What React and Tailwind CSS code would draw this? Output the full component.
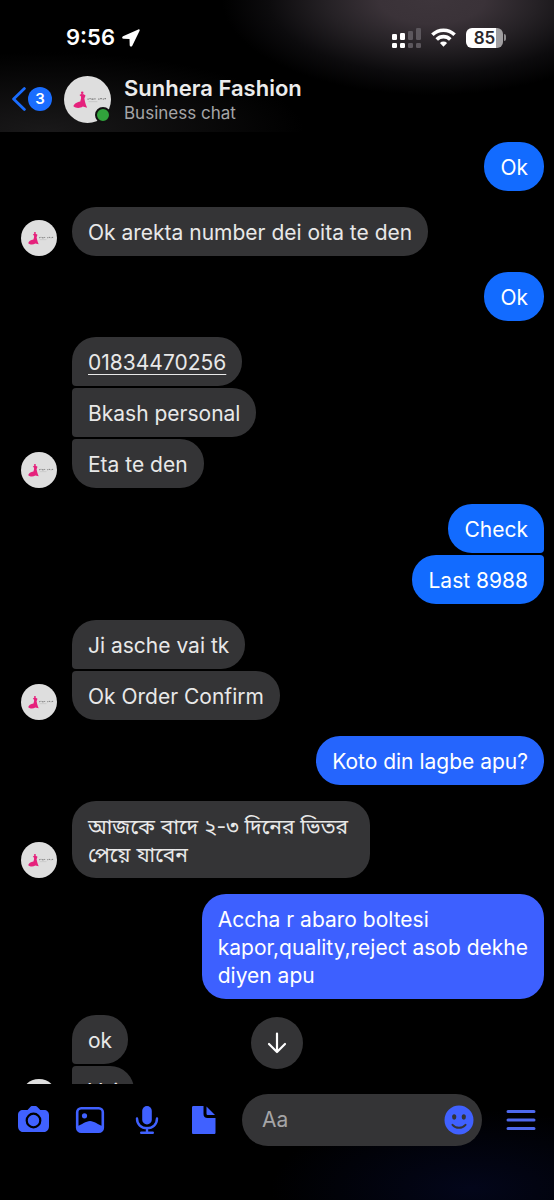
import React, { useState } from 'react';

const groups = [
  { from: 'me', items: [{ text: 'Ok' }] },
  { from: 'them', items: [{ text: 'Ok arekta number dei oita te den' }] },
  { from: 'me', items: [{ text: 'Ok' }] },
  {
    from: 'them',
    items: [{ text: '01834470256', tel: true }, { text: 'Bkash personal' }, { text: 'Eta te den' }],
  },
  { from: 'me', items: [{ text: 'Check' }, { text: 'Last 8988' }] },
  { from: 'them', items: [{ text: 'Ji asche vai tk' }, { text: 'Ok Order Confirm' }] },
  { from: 'me', color: 'bg-[#2565fd]', items: [{ text: 'Koto din lagbe apu?' }] },
  { from: 'them', items: [{ text: 'আজকে বাদে ২-৩ দিনের ভিতর\nপেয়ে যাবেন', bangla: true }] },
  {
    from: 'me',
    color: 'bg-[#3d60ff]',
    items: [{ text: 'Accha r abaro boltesi\nkapor,quality,reject asob dekhe\ndiyen apu' }],
  },
  { from: 'them', items: [{ text: 'ok' }, { text: 'Vai' }] },
];

function Avatar({ className }) {
  return (
    <svg viewBox="0 0 48 48" className={className} role="img" aria-label="Sunhera Fashion">
      <circle cx="24" cy="24" r="24" fill="#dedede" />
      <g fill="#e5217c">
        <circle cx="18.6" cy="17.2" r="1.3" />
        <path d="M15.8 19.4 L17.6 18.4 L20.2 18.6 L22 19.8 L20.8 23 L21.4 26 C21.8 28 22.8 30.4 23.6 32.4 L19.2 31.200 C16 33.4 12 33 9.6 31 C10 28.4 13 26.6 16.6 26 L17.4 23 L17.4 21 Z" />
      </g>
      <path d="M24 23.600h1.200M26 23.200h1.200M28 23.700h2.200M31 23.300h1.200M35 23.600h1.200M37 23.200h1.600M39.600 23.600h1M41.400 23.200h1.400" stroke="#777" strokeWidth="1.3" />
      <path d="M25 26.2h9" stroke="#b5b5b5" strokeWidth="0.6" />
    </svg>
  );
}

function StatusBar() {
  return (
    <div className="flex h-[75px] items-center justify-between pl-[66px] pr-12">
      <div className="flex items-center gap-[6px] text-[22px] font-semibold text-white">
        <span>9:56</span>
        <svg viewBox="0 0 20 20" className="size-5" fill="#fff" aria-hidden="true">
          <path d="M17.3 1.4 2 8.2C.6 8.9 1 10.6 2.500 10.7l6 .2.2 6.300c.1 1.500 1.900 1.900 2.600.5L18.600 2.700c.4-.9-.4-1.700-1.300-1.300Z" />
        </svg>
      </div>
      <div className="flex items-center gap-[10px]">
        <svg viewBox="0 0 29 20" className="h-5 w-[29px]" aria-hidden="true">
          <g fill="#fff">
            <rect x="0" y="6" width="5" height="6" rx="1.200" />
            <rect x="8" y="5" width="5" height="7" rx="1.200" />
            <rect x="0" y="15" width="5" height="5" rx="1.200" />
            <rect x="8" y="15" width="5" height="5" rx="1.200" />
          </g>
          <g fill="#5c575d">
            <rect x="16" y="3" width="5" height="9" rx="1.200" />
            <rect x="24" y="0" width="5" height="12" rx="1.200" />
            <rect x="16" y="15" width="5" height="5" rx="1.200" />
            <rect x="24" y="15" width="5" height="5" rx="1.200" />
          </g>
        </svg>
        <svg viewBox="0 0 25 19" className="h-[19px] w-[25px]" aria-hidden="true">
          <g fill="none" stroke="#fff" strokeWidth="3.600">
            <path d="M1.400 6.800a15.700 15.700 0 0 1 22.200 0" />
            <path d="M5.700 11.400a9.600 9.600 0 0 1 13.600 0" />
          </g>
          <path d="M12.500 18.700 8.900 15a5.200 5.200 0 0 1 7.200 0Z" fill="#fff" />
        </svg>
        <div className="flex items-center gap-px">
          <div className="flex h-5 w-[37px] items-center justify-center rounded-[6px] bg-linear-to-r from-white from-82% to-[#a09ea0] to-82% text-[17px] leading-5 font-semibold text-[#29262a]">
            85
          </div>
          <div className="h-[7px] w-[2px] rounded-r-full bg-[#8e8c8e]" />
        </div>
      </div>
    </div>
  );
}

function Header() {
  return (
    <header className="shrink-0 bg-[radial-gradient(ellipse_210px_95px_at_78%_0%,#3d353b_0%,#3a3238_25%,#252125_50%,#0c0b0d_78%,transparent_100%),radial-gradient(ellipse_260px_80px_at_8%_100%,#1a191a_0%,transparent_100%)]">
      <StatusBar />
      <div className="flex h-[57px] items-start pl-3">
        <button type="button" aria-label="Back, 3 unread chats" className="flex h-12 items-center gap-[2px]">
          <svg viewBox="0 0 14 24" className="h-6 w-[14px]" fill="none" stroke="#1a6dff" strokeWidth="2.800" strokeLinecap="round" strokeLinejoin="round" aria-hidden="true">
            <path d="M12.400 1.600 1.600 12l10.800 10.400" />
          </svg>
          <span className="flex size-6 items-center justify-center rounded-full bg-[#1a6dff] text-[15px] font-semibold text-white">
            3
          </span>
        </button>
        <div className="relative ml-3 mt-px">
          <Avatar className="size-[47px]" />
          <span className="absolute right-0 bottom-0 size-4 rounded-full border-2 border-[#121212] bg-[#31a33c]" />
        </div>
        <div className="ml-[13px]">
          <h1 className="text-[22px] leading-[26px] font-semibold text-[#ececec]">Sunhera Fashion</h1>
          <p className="text-[17px] leading-6 text-[#a5a5a7]">Business chat</p>
        </div>
      </div>
    </header>
  );
}

function Bubble({ item, mine, color, first, last }) {
  let corners = '';
  if (mine) {
    if (!last) corners += ' rounded-br-[4px]';
    if (!first) corners += ' rounded-tr-[4px]';
  } else {
    if (!last) corners += ' rounded-bl-[4px]';
    if (!first) corners += ' rounded-tl-[4px]';
  }
  return (
    <div
      className={`rounded-[24px] pt-3 pb-[9px] pl-4 text-[21px] leading-7 whitespace-pre-line ${
        mine ? `text-white ${color || 'bg-[#126bff]'}` : 'bg-[#343436] text-[#e8e8e8]'
      } ${item.bangla ? 'pr-[22px]' : 'pr-4'}${corners}`}
    >
      {item.tel ? (
        <a href={`tel:${item.text}`} className="underline decoration-1 underline-offset-4">
          {item.text}
        </a>
      ) : (
        item.text
      )}
    </div>
  );
}

function MessageGroup({ group }) {
  const mine = group.from === 'me';
  return (
    <div className={`flex items-end ${mine ? 'justify-end' : 'justify-start'}`}>
      {!mine && <Avatar className="mr-[15px] size-9 shrink-0" />}
      <div className={`flex flex-col gap-[2px] ${mine ? 'items-end' : 'items-start'}`}>
        {group.items.map((item, idx) => (
          <Bubble
            key={idx}
            item={item}
            mine={mine}
            color={group.color}
            first={idx === 0}
            last={idx === group.items.length - 1}
          />
        ))}
      </div>
    </div>
  );
}

function Composer() {
  const [message, setMessage] = useState('');

  return (
    <footer className="shrink-0 bg-[radial-gradient(ellipse_200px_80px_at_85%_90%,#03061a_0%,transparent_100%)] pt-[10px] pb-[54px]">
      <div className="flex items-center pr-[18px] pl-[17px]">
        <button type="button" aria-label="Camera">
          <svg viewBox="0 0 33 30" className="h-[30px] w-[33px]" aria-hidden="true">
            <path fill="#4061ff" d="M6 5h4.500l3-3.200C14.300 1 15 1 16 1h2c1 0 1.700.2 2.400.900L23.300 5H27c3 0 5 2 5 5v11c0 3.500-2 6-5 6H6c-3 0-5-2.500-5-6V10c0-3 2-5 5-5Z" />
            <circle cx="16.500" cy="15.500" r="6.800" fill="none" stroke="#000" strokeWidth="2.200" />
          </svg>
        </button>
        <button type="button" aria-label="Photos" className="ml-6">
          <svg viewBox="0 0 32 30" className="h-[30px] w-8" aria-hidden="true">
            <rect x="3.200" y="3.200" width="25.600" height="23.600" rx="4" fill="none" stroke="#4061ff" strokeWidth="2.600" />
            <circle cx="10.500" cy="10.800" r="2.600" fill="#4061ff" />
            <path fill="#4061ff" d="M3.500 21c4-1.200 8.500-4.800 12.500-5 4 .2 8.500 3.800 12.500 5v3.500c0 1.500-1 2.500-2.500 2.500H6c-1.500 0-2.500-1-2.500-2.500Z" />
          </svg>
        </button>
        <button type="button" aria-label="Voice message" className="ml-[29px]">
          <svg viewBox="0 0 24 30" className="h-[30px] w-6" aria-hidden="true">
            <rect x="7.200" y="1" width="9.600" height="18.500" rx="4.800" fill="#4061ff" />
            <path d="M2 13.500c0 6 4.200 9.600 10 9.600s10-3.600 10-9.600M12 23v4.500M6.200 27.700h11.600" fill="none" stroke="#4061ff" strokeWidth="2.400" strokeLinecap="round" />
          </svg>
        </button>
        <button type="button" aria-label="Send a file" className="ml-8">
          <svg viewBox="0 0 25 30" className="h-[30px] w-[25px]" fill="#4061ff" aria-hidden="true">
            <path d="M2.500 1h10v8c0 2.500 1.500 4 4 4h8v14.500c0 1-.5 1.500-1.500 1.500H2.500c-1 0-1.500-.5-1.500-1.500v-25C1 1.500 1.500 1 2.500 1Z" />
            <path d="M15.500 1.500v7c0 1 .5 1.500 1.500 1.500h7Z" />
          </svg>
        </button>
        <div className="ml-[26px] flex h-[52px] min-w-0 flex-1 items-center rounded-full bg-[#343436] pr-2 pl-5">
          <input
            type="text"
            aria-label="Message"
            placeholder="Aa"
            value={message}
            onChange={(e) => setMessage(e.target.value)}
            className="w-0 min-w-0 flex-1 bg-transparent text-[21px] text-white outline-none placeholder:text-[#a5a5a7]"
          />
          <button type="button" aria-label="Emoji">
            <svg viewBox="0 0 30 30" className="size-[30px]" aria-hidden="true">
              <circle cx="15" cy="15" r="14.500" fill="#4061ff" />
              <ellipse cx="10.200" cy="12" rx="2.100" ry="2.700" fill="#343436" />
              <ellipse cx="19.800" cy="12" rx="2.100" ry="2.700" fill="#343436" />
              <path d="M8.500 19.800c3.500 4 9.500 4 13 0" fill="none" stroke="#343436" strokeWidth="2" strokeLinecap="round" />
            </svg>
          </button>
        </div>
        <button type="button" aria-label="Menu" className="ml-6">
          <svg viewBox="0 0 30 22" className="h-[22px] w-[30px]" stroke="#4e69ee" strokeWidth="3" strokeLinecap="round" aria-hidden="true">
            <path d="M2 2.500h26M2 11h26M2 19.500h26" />
          </svg>
        </button>
      </div>
    </footer>
  );
}

export default function App() {
  return (
    <div className="flex h-screen flex-col bg-black font-[Inter,'Noto_Sans_Bengali',sans-serif]">
      <Header />

      <main className="relative min-h-0 flex-1 overflow-hidden pt-[10px] pr-[10px] pl-[21px]">
        <div className="flex flex-col gap-4">
          {groups.map((group, idx) => (
            <MessageGroup key={idx} group={group} />
          ))}
        </div>

        {/* Jump to latest */}
        <button
          type="button"
          aria-label="Scroll to latest"
          className="absolute bottom-[15px] left-1/2 flex size-[52px] -translate-x-1/2 items-center justify-center rounded-full bg-[#343436]"
        >
          <svg viewBox="0 0 20 22" className="h-[22px] w-5" fill="none" stroke="#fff" strokeWidth="2.200" strokeLinecap="round" strokeLinejoin="round" aria-hidden="true">
            <path d="M10 1.500v18M2 12l8 8 8-8" />
          </svg>
        </button>
      </main>

      <Composer />
    </div>
  );
}
